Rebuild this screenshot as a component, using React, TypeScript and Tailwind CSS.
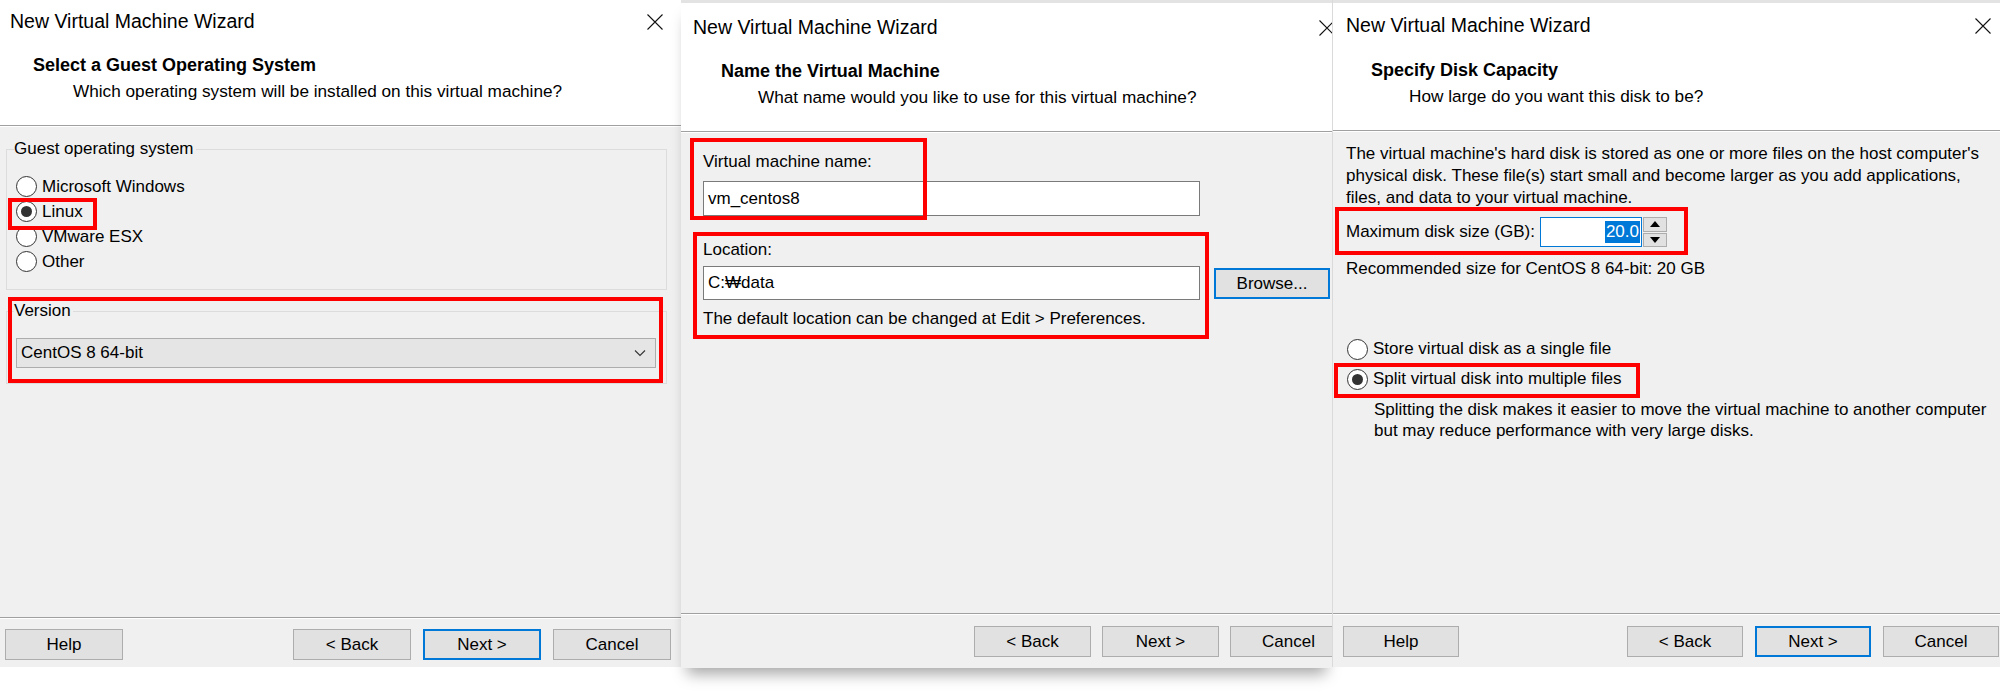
import React from 'react';

// three screenshots of the VMware "New Virtual Machine Wizard", side by side

const uiFont = "font-['Liberation_Sans',Arial,sans-serif]";
const titleFont = "font-['Liberation_Sans',Arial,sans-serif]";

const CloseX = () => (
  <svg width="16" height="16" viewBox="0 0 16 16" className="shrink-0">
    <path d="M0.5 0.5L15.5 15.5M15.5 0.5L0.5 15.5" stroke="#111" strokeWidth="1.1" />
  </svg>
);

const Chevron = () => (
  <svg width="12" height="8" viewBox="0 0 12 8">
    <path d="M1 1.5L6 6.5L11 1.5" fill="none" stroke="#333" strokeWidth="1.1" />
  </svg>
);

const Radio: React.FC<{ checked?: boolean }> = ({ checked }) => (
  <span className="flex h-[21px] w-[21px] shrink-0 items-center justify-center rounded-full border border-[#333] bg-white">
    {checked && <span className="h-[11px] w-[11px] rounded-full bg-[#333]" />}
  </span>
);

const WinButton: React.FC<{ label: string; primary?: boolean; className?: string }> = ({ label, primary, className }) => (
  <button
    className={`flex h-[31px] shrink-0 items-center justify-center bg-[#e1e1e1] text-[17px] leading-none text-black ${
      primary ? 'border-2 border-[#0078d7]' : 'border border-[#adadad]'
    } ${className ?? ''}`}
  >
    {label}
  </button>
);

// red annotation rectangles drawn over the dialogs
const RedBox: React.FC<{ className: string }> = ({ className }) => (
  <div className={`pointer-events-none absolute border-4 border-[#ff0000] ${className}`} />
);

const GuestOsPanel = () => (
  <div className={`relative flex h-[667px] w-[681px] shrink-0 flex-col bg-[#f0f0f0] text-black ${uiFont}`}>
    <header className="h-[126px] shrink-0 border-b border-[#a0a0a0] bg-white">
      <div className="flex h-[44px] items-center justify-between pl-[10px] pr-[18px]">
        <span className={`text-[19.5px] ${titleFont}`}>New Virtual Machine Wizard</span>
        <CloseX />
      </div>
      <div className="mt-[8px] pl-[33px] text-[18px] font-bold leading-[26px]">Select a Guest Operating System</div>
      <div className="pl-[73px] text-[17.2px] leading-[26px]">Which operating system will be installed on this virtual machine?</div>
    </header>

    <main className="flex-1 border-t border-white text-[17px] leading-[22px]">
      <fieldset className="ml-[6px] mr-[14px] mt-[11px] border border-[#dcdcdc] px-[7px] pb-[15px]">
        <legend className="pr-[2px]">Guest operating system</legend>
        <div className="pt-[14px]">
          {[
            { label: 'Microsoft Windows' },
            { label: 'Linux', checked: true },
            { label: 'VMware ESX' },
            { label: 'Other' },
          ].map((os) => (
            <div key={os.label} className="ml-[2px] flex h-[25px] items-center gap-[5px]">
              <Radio checked={os.checked} />
              <span>{os.label}</span>
            </div>
          ))}
        </div>
      </fieldset>

      <fieldset className="ml-[6px] mr-[14px] mt-[10px] border border-[#dcdcdc] px-[7px] pb-[15px]">
        <legend className="pr-[2px]">Version</legend>
        <div className="ml-[2px] mr-[3px] mt-[16px] flex h-[30px] items-center justify-between border border-[#adadad] bg-[#e5e5e5] pl-[4px] pr-[9px]">
          <span>CentOS 8 64-bit</span>
          <Chevron />
        </div>
      </fieldset>
    </main>

    <footer className="flex h-[50px] shrink-0 items-start gap-[12px] border-t border-[#a0a0a0] pl-[5px] pr-[10px] pt-[11px] shadow-[inset_0_1px_0_#fff]">
      <WinButton label="Help" className="w-[118px]" />
      <WinButton label="< Back" className="ml-auto w-[118px]" />
      <WinButton label="Next >" primary className="w-[118px]" />
      <WinButton label="Cancel" className="w-[118px]" />
    </footer>

    <RedBox className="left-[8px] top-[198px] h-[32px] w-[89px]" />
    <RedBox className="left-[8px] top-[297px] h-[86px] w-[655px]" />
  </div>
);

const NamePanel = () => (
  <div className={`relative h-[668px] w-[651px] shrink-0 overflow-hidden bg-[#f0f0f0] text-black shadow-[0_12px_14px_-6px_rgba(0,0,0,0.35)] ${uiFont}`}>
    <div className="flex h-full w-[672px] flex-col">
      <div className="h-[3px] shrink-0 bg-[#e3e3e3]" />
      <header className="h-[129px] shrink-0 border-b border-[#a0a0a0] bg-white">
        <div className="flex h-[50px] items-center justify-between pl-[12px] pr-[18px]">
          <span className={`text-[19.5px] ${titleFont}`}>New Virtual Machine Wizard</span>
          <CloseX />
        </div>
        <div className="mt-[5px] pl-[40px] text-[18px] font-bold leading-[26px]">Name the Virtual Machine</div>
        <div className="pl-[77px] text-[17.2px] leading-[26px]">What name would you like to use for this virtual machine?</div>
      </header>

      <main className="flex-1 border-t border-white pl-[22px] pt-[18px] text-[17px] leading-[22px]">
        <div>Virtual machine name:</div>
        <div className="mt-[8px] flex h-[35px] w-[497px] items-center border border-[#7a7a7a] bg-white pl-[4px]">vm_centos8</div>
        <div className="mt-[23px]">Location:</div>
        <div className="mt-[5px] flex h-[34px] items-center">
          <div className="flex h-[34px] w-[497px] items-center border border-[#7a7a7a] bg-white pl-[4px]">C:₩data</div>
          <WinButton label="Browse..." primary className="ml-[14px] w-[116px]" />
        </div>
        <div className="mt-[8px]">The default location can be changed at Edit &gt; Preferences.</div>
      </main>

      <footer className="flex h-[55px] shrink-0 items-start justify-end gap-[11px] border-t border-[#a0a0a0] pr-[6px] pt-[12px] shadow-[inset_0_1px_0_#fff]">
        <WinButton label="< Back" className="w-[117px]" />
        <WinButton label="Next >" className="w-[117px]" />
        <WinButton label="Cancel" className="w-[117px]" />
      </footer>
    </div>

    <RedBox className="left-[9px] top-[138px] h-[82px] w-[237px]" />
    <RedBox className="left-[12px] top-[232px] h-[107px] w-[516px]" />
  </div>
);

const DiskPanel = () => (
  <div className={`relative flex h-[667px] w-[668px] shrink-0 flex-col overflow-hidden border-l border-[#dadada] bg-[#f0f0f0] text-black ${uiFont}`}>
    <div className="h-[3px] shrink-0 bg-[#e3e3e3]" />
    <header className="h-[128px] shrink-0 border-b border-[#a0a0a0] bg-white">
      <div className="flex h-[46px] items-center justify-between pl-[13px] pr-[9px]">
        <span className={`text-[19.5px] ${titleFont}`}>New Virtual Machine Wizard</span>
        <CloseX />
      </div>
      <div className="mt-[8px] pl-[38px] text-[18px] font-bold leading-[26px]">Specify Disk Capacity</div>
      <div className="pl-[76px] text-[17.2px] leading-[26px]">How large do you want this disk to be?</div>
    </header>

    <main className="flex-1 border-t border-white pl-[13px] pt-[11px] text-[17px] leading-[22px]">
      <p className="whitespace-nowrap">
        The virtual machine's hard disk is stored as one or more files on the host computer's
        <br />
        physical disk. These file(s) start small and become larger as you add applications,
        <br />
        files, and data to your virtual machine.
      </p>

      <div className="mt-[8px] flex h-[30px] items-center">
        <span className="w-[194px] shrink-0">Maximum disk size (GB):</span>
        <div className="flex h-[30px] w-[102px] items-center justify-end border border-[#0078d7] bg-white pr-[1px]">
          <span className="bg-[#0078d7] px-[1px] leading-[22px] text-white">20.0</span>
        </div>
        <div className="ml-[1px] flex h-[30px] w-[24px] flex-col gap-[1px]">
          <div className="flex flex-1 items-center justify-center border border-[#adadad] bg-[#e1e1e1]">
            <svg width="10" height="6" viewBox="0 0 10 6">
              <path d="M5 0L10 6H0Z" fill="#000" />
            </svg>
          </div>
          <div className="flex flex-1 items-center justify-center border border-[#adadad] bg-[#e1e1e1]">
            <svg width="10" height="6" viewBox="0 0 10 6">
              <path d="M0 0H10L5 6Z" fill="#000" />
            </svg>
          </div>
        </div>
      </div>

      <div className="mt-[11px]">Recommended size for CentOS 8 64-bit: 20 GB</div>

      <div className="mt-[54px] flex h-[30px] items-center gap-[5px] pl-[1px]">
        <Radio />
        <span>Store virtual disk as a single file</span>
      </div>
      <div className="flex h-[30px] items-center gap-[5px] pl-[1px]">
        <Radio checked />
        <span>Split virtual disk into multiple files</span>
      </div>
      <p className="mt-[5px] whitespace-nowrap pl-[28px] leading-[21px]">
        Splitting the disk makes it easier to move the virtual machine to another computer
        <br />
        but may reduce performance with very large disks.
      </p>
    </main>

    <footer className="flex h-[54px] shrink-0 items-start gap-[12px] border-t border-[#a0a0a0] pl-[10px] pr-[1px] pt-[12px] shadow-[inset_0_1px_0_#fff]">
      <WinButton label="Help" className="w-[116px]" />
      <WinButton label="< Back" className="ml-auto w-[116px]" />
      <WinButton label="Next >" primary className="w-[116px]" />
      <WinButton label="Cancel" className="w-[116px]" />
    </footer>

    <RedBox className="left-[2px] top-[207px] h-[48px] w-[353px]" />
    <RedBox className="left-[1px] top-[363px] h-[35px] w-[306px]" />
  </div>
);

export default function App() {
  return (
    <div className="flex h-[696px] w-[2000px] items-start overflow-hidden bg-white">
      <GuestOsPanel />
      <NamePanel />
      <DiskPanel />
    </div>
  );
}
